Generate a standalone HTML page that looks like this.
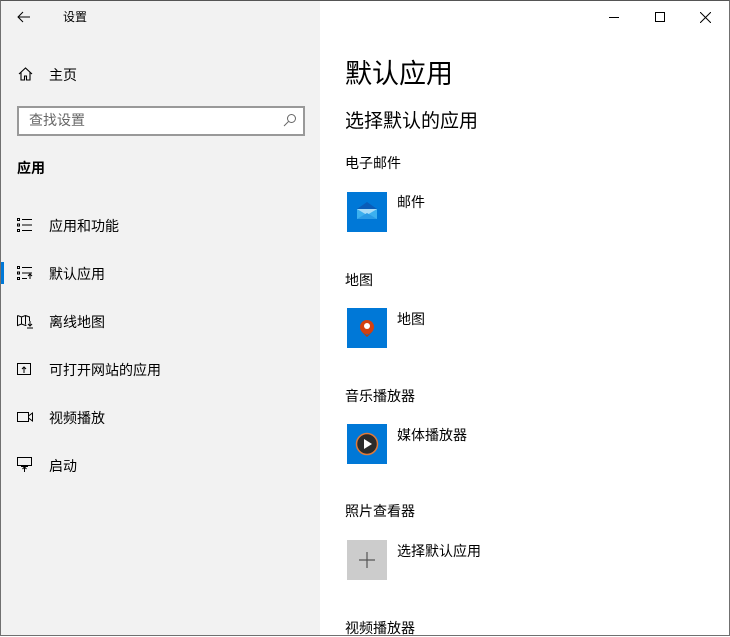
<!DOCTYPE html>
<html><head><meta charset="utf-8"><style>
*{margin:0;padding:0;box-sizing:border-box}
body{width:730px;height:637px;overflow:hidden;background:#fff;font-family:"Liberation Sans","Noto Sans CJK SC",sans-serif;color:#000;position:relative}
.frame{position:absolute;left:0;top:0;width:730px;height:636px;border:1px solid #707070;border-top:1px solid #555}
.left{position:absolute;left:1px;top:1px;width:319px;height:634px;background:#f2f2f2}
.t{position:absolute;white-space:nowrap;line-height:1}
.ico{position:absolute}
.nav{font-size:14px}
.app{position:absolute;left:347px;width:40px;height:40px;background:#0078d7}
</style></head><body>
<div class="left"></div>
<div class="frame"></div>
<svg class="ico" style="left:17px;top:10px" width="14" height="14" viewBox="0 0 14 14"><path d="M13 7H1M6 2L1 7l5 5" fill="none" stroke="#000" stroke-width="1"/></svg>
<div class="t" style="left:63px;top:11px;font-size:12px">设置</div>
<div style="position:absolute;left:609px;top:17px;width:10px;height:1px;background:#000"></div>
<div style="position:absolute;left:655px;top:12px;width:10px;height:10px;border:1px solid #000"></div>
<svg class="ico" style="left:700px;top:12px" width="11" height="11"><path d="M0 0L11 11M11 0L0 11" stroke="#000" stroke-width="1"/></svg>
<svg class="ico" style="left:18px;top:67px" width="15" height="14" viewBox="0 0 15 14"><path d="M1 7L7.5 1 14 7M3 5v8h3.5V9h2v4H12V5" fill="none" stroke="#000" stroke-width="1.1"/></svg>
<div class="t nav" style="left:49px;top:68px">主页</div>
<div style="position:absolute;left:17px;top:106px;width:288px;height:30px;border:2px solid #999;background:#fff"></div>
<div class="t" style="left:29px;top:113px;font-size:14px;color:#666">查找设置</div>
<svg class="ico" style="left:283px;top:113px" width="14" height="14"><circle cx="8.5" cy="5.5" r="4" fill="none" stroke="#666"/><path d="M5.5 8.5L1 13" stroke="#666"/></svg>
<div class="t" style="left:17px;top:161px;font-size:14px;font-weight:bold">应用</div>
<div style="position:absolute;left:1px;top:262px;width:3px;height:22px;background:#0078d7"></div>
<svg class="ico" style="left:17px;top:218px" width="16" height="15"><g fill="none" stroke="#000"><rect x="0.5" y="0.5" width="2" height="2"/><rect x="0.5" y="6" width="2" height="2"/><rect x="0.5" y="11.5" width="2" height="2"/><path d="M5 1.5h10M5 7h10M5 12.5h10"/></g></svg>
<div class="t nav" style="left:49px;top:219px">应用和功能</div>
<svg class="ico" style="left:17px;top:266px" width="16" height="15"><g fill="none" stroke="#000"><rect x="0.5" y="0.5" width="2" height="2"/><rect x="0.5" y="6" width="2" height="2"/><rect x="0.5" y="11.5" width="2" height="2"/><path d="M5 1.5h10M5 7h10M5 12.5h5M13 13V8M11 10l2-2 2 2"/></g></svg>
<div class="t nav" style="left:49px;top:267px">默认应用</div>
<svg class="ico" style="left:17px;top:314px" width="17" height="15"><g fill="none" stroke="#000"><path d="M0.5 1.5v10l4-1.5 4 1.5 1-0.3M0.5 1.5l4 1.5 4-1.5 4 1.5v4M4.5 3v7M8.5 1.5v9M13 7v5M11 10l2 2 2-2M10 14h6"/></g></svg>
<div class="t nav" style="left:49px;top:315px">离线地图</div>
<svg class="ico" style="left:17px;top:362px" width="15" height="14"><g fill="none" stroke="#000"><rect x="0.5" y="1.5" width="13" height="11"/><path d="M7 11V5M5 7l2-2 2 2"/></g></svg>
<div class="t nav" style="left:49px;top:363px">可打开网站的应用</div>
<svg class="ico" style="left:17px;top:411px" width="17" height="12"><g fill="none" stroke="#000"><rect x="0.5" y="1.5" width="11" height="9"/><path d="M11.5 5l4-3v8l-4-3"/></g></svg>
<div class="t nav" style="left:49px;top:411px">视频播放</div>
<svg class="ico" style="left:17px;top:457px" width="16" height="16"><g fill="none" stroke="#000"><rect x="0.5" y="0.5" width="14" height="8"/><path d="M7.5 15V10M5.5 12l2-2 2 2M4 9.5h7"/></g></svg>
<div class="t nav" style="left:49px;top:459px">启动</div>
<div class="t" style="left:345px;top:61px;font-size:27px">默认应用</div>
<div class="t" style="left:345px;top:112px;font-size:19px">选择默认的应用</div>
<div class="t" style="left:345px;top:156px;font-size:14px">电子邮件</div>
<div class="app" style="top:192px"><svg width="40" height="40"><path d="M10 17l10-7 10 7v9H10z" fill="#0a5cb8"/><rect x="10" y="17" width="20" height="10" fill="#3cb0ef"/><path d="M10 17l10 6 10-6" fill="#a8dcf8"/><path d="M10 27l10-6 10 6" fill="#2a9be6"/></svg></div>
<div class="t" style="left:397px;top:195px;font-size:14px">邮件</div>
<div class="t" style="left:345px;top:273px;font-size:14px">地图</div>
<div class="app" style="top:308px"><svg width="40" height="40"><path d="M20 29l-5-5 5 3 5-3z" fill="#b83a0c"/><circle cx="20" cy="19" r="7" fill="#d4400f"/><circle cx="20" cy="18" r="3" fill="#fff"/></svg></div>
<div class="t" style="left:397px;top:312px;font-size:14px">地图</div>
<div class="t" style="left:345px;top:389px;font-size:14px">音乐播放器</div>
<div class="app" style="top:424px"><svg width="40" height="40"><circle cx="20" cy="20" r="10.5" fill="#2b2b2b" stroke="#e07a3a" stroke-width="1.5"/><path d="M17 15v10l8-5z" fill="#fff"/></svg></div>
<div class="t" style="left:397px;top:428px;font-size:14px">媒体播放器</div>
<div class="t" style="left:345px;top:504px;font-size:14px">照片查看器</div>
<div class="app" style="top:540px;background:#ccc"><svg width="40" height="40"><path d="M20 12v16M12 20h16" stroke="#555" stroke-width="1.2"/></svg></div>
<div class="t" style="left:397px;top:544px;font-size:14px">选择默认应用</div>
<div class="t" style="left:345px;top:621px;font-size:14px">视频播放器</div>
</body></html>
